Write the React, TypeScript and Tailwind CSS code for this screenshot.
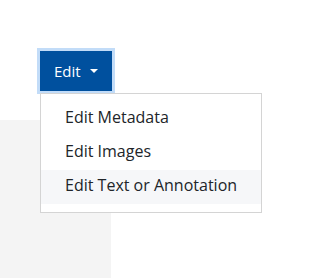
import React from "react";

export default function App() {
  const items = ["Edit Metadata", "Edit Images", "Edit Text or Annotation"];

  return (
    <div
      className="w-[319px] h-[278px] bg-white overflow-hidden"
      style={{ fontFamily: '"Open Sans", sans-serif' }}
    >
      <div className="pt-[51px] pl-[40px]">
        <div className="relative w-[72px]">
          {/* Dropdown toggle */}
          <button className="flex items-center w-[72px] h-[40px] pl-[14px] bg-[#00509e] text-white text-[15px] shadow-[0_0_0_3px_#c2dcf8]">
            <span>Edit</span>
            <span className="ml-[9px] w-0 h-0 border-t-[4.5px] border-t-white border-x-[4.5px] border-x-transparent" />
          </button>

          {/* Menu */}
          <div className="absolute z-10 left-0 top-full mt-[2px] w-[222px] py-2 bg-white border border-[#d4d4d4]">
            {items.map((item, i) => (
              <div
                key={item}
                className={`h-[34px] pl-[24px] pb-[4px] flex items-center text-[16px] text-[#212529] ${
                  i === 2 ? "bg-[#f6f7f9]" : ""
                }`}
              >
                {item}
              </div>
            ))}
          </div>
        </div>
      </div>

      {/* Gray panel behind menu */}
      <div className="mt-[29px] w-[111px] h-[159px] bg-[#f4f4f4]" />
    </div>
  );
}
